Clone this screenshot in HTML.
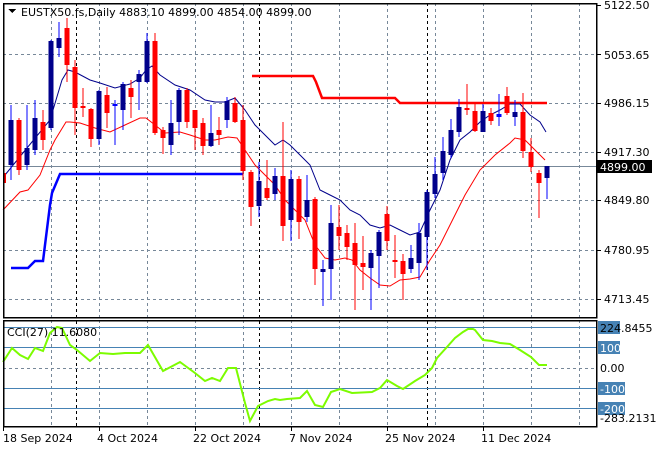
<!DOCTYPE html>
<html><head><meta charset="utf-8"><style>
body{margin:0;background:#fff;width:660px;height:450px;overflow:hidden;font-family:Tahoma,"DejaVu Sans","Liberation Sans",sans-serif;}
svg text{font-family:Tahoma,"DejaVu Sans","Liberation Sans",sans-serif;font-size:11px;fill:#000}
</style></head><body>
<svg width="660" height="450" xmlns="http://www.w3.org/2000/svg" shape-rendering="crispEdges">
<rect width="660" height="450" fill="#fff"/>
<!-- grid main -->
<g stroke="#778899" stroke-dasharray="3,3" stroke-width="1">
<line x1="3" y1="54.5" x2="596" y2="54.5"/><line x1="3" y1="103.5" x2="596" y2="103.5"/><line x1="3" y1="152.5" x2="596" y2="152.5"/><line x1="3" y1="200.5" x2="596" y2="200.5"/><line x1="3" y1="250.5" x2="596" y2="250.5"/><line x1="3" y1="299.5" x2="596" y2="299.5"/>
<line x1="51.5" y1="3" x2="51.5" y2="317"/><line x1="99.5" y1="3" x2="99.5" y2="317"/><line x1="147.5" y1="3" x2="147.5" y2="317"/><line x1="195.5" y1="3" x2="195.5" y2="317"/><line x1="243.5" y1="3" x2="243.5" y2="317"/><line x1="291.5" y1="3" x2="291.5" y2="317"/><line x1="339.5" y1="3" x2="339.5" y2="317"/><line x1="387.5" y1="3" x2="387.5" y2="317"/><line x1="435.5" y1="3" x2="435.5" y2="317"/><line x1="483.5" y1="3" x2="483.5" y2="317"/><line x1="531.5" y1="3" x2="531.5" y2="317"/><line x1="579.5" y1="3" x2="579.5" y2="317"/>
<line x1="51.5" y1="320" x2="51.5" y2="426"/><line x1="99.5" y1="320" x2="99.5" y2="426"/><line x1="147.5" y1="320" x2="147.5" y2="426"/><line x1="195.5" y1="320" x2="195.5" y2="426"/><line x1="243.5" y1="320" x2="243.5" y2="426"/><line x1="291.5" y1="320" x2="291.5" y2="426"/><line x1="339.5" y1="320" x2="339.5" y2="426"/><line x1="387.5" y1="320" x2="387.5" y2="426"/><line x1="435.5" y1="320" x2="435.5" y2="426"/><line x1="483.5" y1="320" x2="483.5" y2="426"/><line x1="531.5" y1="320" x2="531.5" y2="426"/><line x1="579.5" y1="320" x2="579.5" y2="426"/>
<line x1="3" y1="368.5" x2="596" y2="368.5"/>
</g>
<g stroke="#000" stroke-dasharray="3,3"><line x1="76.5" y1="3" x2="76.5" y2="426"/><line x1="259.5" y1="3" x2="259.5" y2="426"/><line x1="427.5" y1="3" x2="427.5" y2="426"/></g>
<line x1="3" y1="166.5" x2="596" y2="166.5" stroke="#778899"/>
<!-- CCI levels -->
<g stroke="#4682b4"><line x1="3" y1="327.5" x2="596" y2="327.5"/><line x1="3" y1="347.5" x2="596" y2="347.5"/><line x1="3" y1="388.5" x2="596" y2="388.5"/><line x1="3" y1="408.5" x2="596" y2="408.5"/></g>
<!-- S/R lines -->
<polyline shape-rendering="auto" fill="none" stroke="#0000ff" stroke-width="2.5" points="11,268 28,268 35,261 43,261 50,205 52,193 60,174 243,174"/>
<polyline shape-rendering="auto" fill="none" stroke="#ff0000" stroke-width="2.5" points="252,76 313,76 316,82 322,98 395,98 400,103 547,103"/>
<!-- MAs -->
<polyline shape-rendering="auto" fill="none" stroke="#00008b" stroke-width="1" points="5,175 27,148 50,120 62,80 68,70 75,72 90,80 100,83 115,88 130,84 140,78 146,70 152,66 160,75 175,85 190,90 205,100 215,102 225,102 235,98 245,110 255,125 265,135 275,145 283,140 290,145 300,155 310,165 320,190 330,195 340,200 350,210 360,215 370,225 380,228 390,225 400,230 410,235 420,232 430,210 440,190 450,160 460,140 470,132 480,122 490,115 500,110 510,104 520,104 530,115 540,122 546,132"/>
<polyline shape-rendering="auto" fill="none" stroke="#ff0000" stroke-width="1" points="3,210 20,192 28,190 40,175 50,150 55,140 66,122 70,122 80,123 95,128 110,132 125,125 140,118 146,118 155,125 165,133 180,132 190,135 205,140 215,140 228,137 237,138 245,150 255,165 265,175 275,185 285,200 295,210 305,220 315,245 325,258 335,260 345,258 352,260 360,270 370,278 380,285 390,286 400,280 410,279 420,277 430,260 440,245 455,215 465,195 480,170 495,155 510,143 515,138 525,140 535,150 545,160"/>
<!-- candles -->
<g id="c"></g>
<g>
<!-- x, wick top, wick bottom, body top, body bottom -->
<rect x="3" y="173" width="1" height="24" fill="#f00"/><rect x="3" y="173" width="3" height="10" fill="#f00"/>
<rect x="10.5" y="105" width="1" height="75" fill="#00f"/><rect x="8.5" y="120" width="5" height="45" fill="#00008b" stroke="#00f" stroke-width="0"/>
<rect x="18.5" y="118" width="1" height="57" fill="#f00"/><rect x="16.5" y="120" width="5" height="50" fill="#f00"/>
<rect x="26.5" y="105" width="1" height="65" fill="#00f"/><rect x="24.5" y="148" width="5" height="17" fill="#00008b"/>
<rect x="34.5" y="100" width="1" height="55" fill="#00f"/><rect x="32.5" y="118" width="5" height="32" fill="#00008b"/>
<rect x="42.5" y="110" width="1" height="40" fill="#f00"/><rect x="40.5" y="122" width="5" height="18" fill="#f00"/>
<rect x="50.5" y="40" width="1" height="90" fill="#00f"/><rect x="48.5" y="41" width="5" height="87" fill="#00008b"/>
<rect x="58.5" y="22" width="1" height="35" fill="#00f"/><rect x="56.5" y="38" width="5" height="10" fill="#00008b"/>
<rect x="66.5" y="18" width="1" height="64" fill="#f00"/><rect x="64.5" y="28" width="5" height="37" fill="#f00"/>
<rect x="74.5" y="60" width="1" height="75" fill="#f00"/><rect x="72.5" y="67" width="5" height="41" fill="#f00"/>
<rect x="82.5" y="88" width="1" height="29" fill="#f00"/><rect x="80.5" y="106" width="5" height="2" fill="#f00"/>
<rect x="90.5" y="108" width="1" height="39" fill="#f00"/><rect x="88.5" y="109" width="5" height="30" fill="#f00"/>
<rect x="98.5" y="90" width="1" height="55" fill="#00f"/><rect x="96.5" y="91" width="5" height="48" fill="#00008b"/>
<rect x="106.5" y="87" width="1" height="41" fill="#f00"/><rect x="104.5" y="95" width="5" height="18" fill="#f00"/>
<rect x="114.5" y="100" width="1" height="45" fill="#00f"/><rect x="112.5" y="104" width="5" height="2" fill="#00f"/>
<rect x="122.5" y="82" width="1" height="48" fill="#00f"/><rect x="120.5" y="84" width="5" height="26" fill="#00008b"/>
<rect x="130.5" y="80" width="1" height="38" fill="#f00"/><rect x="128.5" y="88" width="5" height="9" fill="#f00"/>
<rect x="138.5" y="70" width="1" height="40" fill="#00f"/><rect x="136.5" y="74" width="5" height="8" fill="#00008b"/>
<rect x="146.5" y="33" width="1" height="50" fill="#00f"/><rect x="144.5" y="41" width="5" height="41" fill="#00008b"/>
<rect x="154.5" y="33" width="1" height="102" fill="#f00"/><rect x="152.5" y="41" width="5" height="92" fill="#f00"/>
<rect x="162.5" y="127" width="1" height="27" fill="#f00"/><rect x="160.5" y="130" width="5" height="8" fill="#f00"/>
<rect x="170.5" y="100" width="1" height="55" fill="#00f"/><rect x="168.5" y="123" width="5" height="22" fill="#00008b"/>
<rect x="178.5" y="88" width="1" height="47" fill="#00f"/><rect x="176.5" y="90" width="5" height="32" fill="#00008b"/>
<rect x="186.5" y="88" width="1" height="40" fill="#f00"/><rect x="184.5" y="90" width="5" height="32" fill="#f00"/>
<rect x="194.5" y="110" width="1" height="40" fill="#f00"/><rect x="192.5" y="110" width="5" height="18" fill="#f00"/>
<rect x="202.5" y="118" width="1" height="37" fill="#f00"/><rect x="200.5" y="123" width="5" height="23" fill="#f00"/>
<rect x="210.5" y="105" width="1" height="42" fill="#00f"/><rect x="208.5" y="133" width="5" height="13" fill="#00008b"/>
<rect x="218.5" y="117" width="1" height="28" fill="#f00"/><rect x="216.5" y="130" width="5" height="5" fill="#f00"/>
<rect x="226.5" y="97" width="1" height="31" fill="#00f"/><rect x="224.5" y="101" width="5" height="19" fill="#00008b"/>
<rect x="234.5" y="97" width="1" height="26" fill="#f00"/><rect x="232.5" y="103" width="5" height="19" fill="#f00"/>
<rect x="242.5" y="105" width="1" height="75" fill="#f00"/><rect x="240.5" y="120" width="5" height="51" fill="#f00"/>
<rect x="250.5" y="170" width="1" height="56" fill="#f00"/><rect x="248.5" y="172" width="5" height="35" fill="#f00"/>
<rect x="258.5" y="162" width="1" height="55" fill="#00f"/><rect x="256.5" y="181" width="5" height="25" fill="#00008b"/>
<rect x="266.5" y="160" width="1" height="40" fill="#f00"/><rect x="264.5" y="188" width="5" height="10" fill="#f00"/>
<rect x="274.5" y="168" width="1" height="32" fill="#00f"/><rect x="272.5" y="176" width="5" height="18" fill="#00008b"/>
<rect x="282.5" y="122" width="1" height="119" fill="#f00"/><rect x="280.5" y="176" width="5" height="50" fill="#f00"/>
<rect x="290.5" y="170" width="1" height="71" fill="#00f"/><rect x="288.5" y="179" width="5" height="41" fill="#00008b"/>
<rect x="298.5" y="176" width="1" height="63" fill="#f00"/><rect x="296.5" y="179" width="5" height="43" fill="#f00"/>
<rect x="306.5" y="175" width="1" height="47" fill="#00f"/><rect x="304.5" y="200" width="5" height="17" fill="#00008b"/>
<rect x="314.5" y="197" width="1" height="88" fill="#f00"/><rect x="312.5" y="199" width="5" height="70" fill="#f00"/>
<rect x="322.5" y="260" width="1" height="46" fill="#00f"/><rect x="320.5" y="269" width="5" height="3" fill="#00008b"/>
<rect x="330.5" y="205" width="1" height="95" fill="#00f"/><rect x="328.5" y="223" width="5" height="46" fill="#00008b"/>
<rect x="338.5" y="205" width="1" height="45" fill="#f00"/><rect x="336.5" y="227" width="5" height="9" fill="#f00"/>
<rect x="346.5" y="225" width="1" height="35" fill="#f00"/><rect x="344.5" y="233" width="5" height="14" fill="#f00"/>
<rect x="354.5" y="223" width="1" height="87" fill="#f00"/><rect x="352.5" y="243" width="5" height="22" fill="#f00"/>
<rect x="362.5" y="236" width="1" height="54" fill="#f00"/><rect x="360.5" y="263" width="5" height="4" fill="#f00"/>
<rect x="370.5" y="250" width="1" height="60" fill="#00f"/><rect x="368.5" y="253" width="5" height="15" fill="#00008b"/>
<rect x="378.5" y="230" width="1" height="58" fill="#00f"/><rect x="376.5" y="232" width="5" height="24" fill="#00008b"/>
<rect x="386.5" y="206" width="1" height="44" fill="#f00"/><rect x="384.5" y="214" width="5" height="27" fill="#f00"/>
<rect x="394.5" y="235" width="1" height="43" fill="#f00"/><rect x="392.5" y="260" width="5" height="2" fill="#f00"/>
<rect x="402.5" y="254" width="1" height="46" fill="#f00"/><rect x="400.5" y="261" width="5" height="13" fill="#f00"/>
<rect x="410.5" y="245" width="1" height="28" fill="#00f"/><rect x="408.5" y="258" width="5" height="11" fill="#00008b"/>
<rect x="418.5" y="223" width="1" height="57" fill="#00f"/><rect x="416.5" y="233" width="5" height="30" fill="#00008b"/>
<rect x="426.5" y="190" width="1" height="80" fill="#00f"/><rect x="424.5" y="192" width="5" height="45" fill="#00008b"/>
<rect x="434.5" y="157" width="1" height="41" fill="#00f"/><rect x="432.5" y="174" width="5" height="20" fill="#00008b"/>
<rect x="442.5" y="137" width="1" height="43" fill="#00f"/><rect x="440.5" y="151" width="5" height="22" fill="#00008b"/>
<rect x="450.5" y="119" width="1" height="39" fill="#00f"/><rect x="448.5" y="130" width="5" height="25" fill="#00008b"/>
<rect x="458.5" y="99" width="1" height="38" fill="#00f"/><rect x="456.5" y="107" width="5" height="25" fill="#00008b"/>
<rect x="466.5" y="84" width="1" height="31" fill="#f00"/><rect x="464.5" y="108" width="5" height="2" fill="#f00"/>
<rect x="474.5" y="104" width="1" height="28" fill="#f00"/><rect x="472.5" y="111" width="5" height="20" fill="#f00"/>
<rect x="482.5" y="104" width="1" height="28" fill="#00f"/><rect x="480.5" y="111" width="5" height="21" fill="#00008b"/>
<rect x="490.5" y="108" width="1" height="17" fill="#f00"/><rect x="488.5" y="113" width="5" height="8" fill="#f00"/>
<rect x="498.5" y="94" width="1" height="32" fill="#00f"/><rect x="496.5" y="114" width="5" height="3" fill="#00f"/>
<rect x="506.5" y="87" width="1" height="28" fill="#f00"/><rect x="504.5" y="96" width="5" height="17" fill="#f00"/>
<rect x="514.5" y="100" width="1" height="26" fill="#00f"/><rect x="512.5" y="112" width="5" height="5" fill="#00008b"/>
<rect x="522.5" y="93" width="1" height="65" fill="#f00"/><rect x="520.5" y="112" width="5" height="39" fill="#f00"/>
<rect x="530.5" y="138" width="1" height="34" fill="#f00"/><rect x="528.5" y="152" width="5" height="15" fill="#f00"/>
<rect x="538.5" y="170" width="1" height="48" fill="#f00"/><rect x="536.5" y="173" width="5" height="10" fill="#f00"/>
<rect x="546.5" y="166" width="1" height="33" fill="#00f"/><rect x="544.5" y="166" width="5" height="12" fill="#00008b"/>
</g>
<!-- CCI line -->
<polyline shape-rendering="auto" fill="none" stroke="#7cfc00" stroke-width="2" points="3,362 12,348 20,355 28,359 35,348 43,351 50,333 57,327 62,328 70,345 77,350 90,361 100,353 113,354 125,353 140,353 148,345 163,371 180,362 195,373 205,381 212,378 220,381 228,368 236,368 245,403 250,421 258,406 268,401 275,399 280,400 287,399 300,398 307,391 315,405 323,407 331,392 340,389 352,393 372,392 380,388 387,380 397,386 403,389 415,381 425,375 432,368 437,358 447,347 455,338 463,332 468,329 473,329 475,330 483,340 492,341 500,343 510,344 520,350 531,357 539,365 547,365"/>
<!-- frames -->
<g fill="none" stroke="#000" stroke-width="1.5"><rect x="3.5" y="3.5" width="593" height="314"/><rect x="3.5" y="320.5" width="593" height="106"/></g>
<!-- right axis ticks -->
<g stroke="#000"><line x1="597" y1="5.5" x2="601" y2="5.5"/><line x1="597" y1="54.5" x2="601" y2="54.5"/><line x1="597" y1="103.5" x2="601" y2="103.5"/><line x1="597" y1="152.5" x2="601" y2="152.5"/><line x1="597" y1="200.5" x2="601" y2="200.5"/><line x1="597" y1="250.5" x2="601" y2="250.5"/><line x1="597" y1="299.5" x2="601" y2="299.5"/>
<line x1="3.5" y1="427" x2="3.5" y2="431"/><line x1="99.5" y1="427" x2="99.5" y2="431"/><line x1="195.5" y1="427" x2="195.5" y2="431"/><line x1="291.5" y1="427" x2="291.5" y2="431"/><line x1="387.5" y1="427" x2="387.5" y2="431"/><line x1="483.5" y1="427" x2="483.5" y2="431"/></g>
<g>
<text x="604" y="9">5122.50</text><text x="604" y="59">5053.65</text><text x="604" y="107">4986.15</text><text x="604" y="156">4917.30</text><text x="604" y="204">4849.80</text><text x="604" y="254">4780.95</text><text x="604" y="303">4713.45</text>
</g>
<rect x="597" y="160" width="55" height="13" fill="#000"/><text x="600" y="171" style="fill:#fff">4899.00</text>
<rect x="598" y="321" width="22" height="13" fill="#4682b4"/><text x="600" y="332">224.8455</text>
<rect x="598" y="341" width="22" height="13" fill="#4682b4"/><text x="600" y="352" style="fill:#fff">100</text>
<text x="600" y="372">0.00</text>
<rect x="598" y="382" width="27" height="13" fill="#4682b4"/><text x="600" y="393" style="fill:#fff">-100</text>
<rect x="598" y="402" width="27" height="13" fill="#4682b4"/><text x="600" y="413" style="fill:#fff">-200</text>
<text x="600" y="422">-283.2131</text>
<text x="3" y="442">18 Sep 2024</text><text x="97" y="442">4 Oct 2024</text><text x="193" y="442">22 Oct 2024</text><text x="289" y="442">7 Nov 2024</text><text x="385" y="442">25 Nov 2024</text><text x="481" y="442">11 Dec 2024</text>
<polygon points="8,9 16,9 12,13" fill="#000"/>
<text x="21" y="16">EUSTX50.fs,Daily  4883.10 4899.00 4854.00 4899.00</text>
<text x="7" y="336">CCI(27) 11.6080</text>
</svg>
</body></html>
